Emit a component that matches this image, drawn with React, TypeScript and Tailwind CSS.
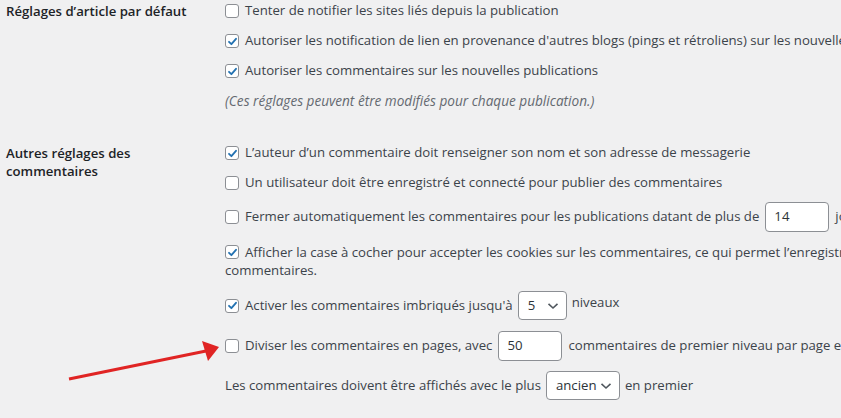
import { ReactNode } from "react";

const font = { fontFamily: '"Open Sans", "Noto Sans", sans-serif' };

function Box({ checked }: { checked?: boolean }) {
  return (
    <span className="mr-[6px] flex h-[14px] w-[14px] shrink-0 items-center justify-center rounded-[3px] border border-[#8c8f94] bg-white">
      {checked && (
        <svg width="11" height="11" viewBox="0 0 11 11">
          <path d="M2 5.8 L4.4 8.2 L9 2.8" fill="none" stroke="#2271b1" strokeWidth="1.8" strokeLinecap="round" strokeLinejoin="round" />
        </svg>
      )}
    </span>
  );
}

function Field({ value, w }: { value: string; w: string }) {
  return (
    <span className={`mx-[6px] flex h-[30px] items-center rounded-[4px] border border-[#8c8f94] bg-white pl-[8px] text-[#2c3338] ${w}`}>
      {value}
    </span>
  );
}

function Chevron() {
  return (
    <svg width="12" height="8" viewBox="0 0 12 8">
      <path d="M1.5 1.8 L6 6 L10.5 1.8" fill="none" stroke="#50575e" strokeWidth="1.6" />
    </svg>
  );
}

function Dropdown({ value, w }: { value: string; w: string }) {
  return (
    <span className={`mx-[5px] flex h-[29px] items-center justify-between rounded-[4px] border border-[#8c8f94] bg-white pl-[9px] pr-[7px] text-[#2c3338] ${w}`}>
      <span>{value}</span>
      <Chevron />
    </span>
  );
}

function Row({ children, className = "" }: { children: ReactNode; className?: string }) {
  return <div className={`flex items-center whitespace-nowrap ${className}`}>{children}</div>;
}

export default function App() {
  return (
    <div className="relative h-[418px] w-[841px] overflow-hidden bg-[#f0f0f1] text-[13.2px] text-[#3c434a]" style={font}>
      {/* Réglages d'article par défaut */}
      <div className="flex pt-[1px]">
        <div className="w-[225px] shrink-0 pl-[6px] font-semibold leading-[20px] text-[#1d2327]">
          Réglages d’article par défaut
        </div>
        <div className="flex flex-col">
          <Row className="h-[20px]">
            <Box />
            Tenter de notifier les sites liés depuis la publication
          </Row>
          <Row className="mt-[10px] h-[20px]">
            <Box checked />
            Autoriser les notification de lien en provenance d'autres blogs (pings et rétroliens) sur les nouvelles publications
          </Row>
          <Row className="mt-[10px] h-[20px]">
            <Box checked />
            Autoriser les commentaires sur les nouvelles publications
          </Row>
          <Row className="mt-[10px] h-[20px] text-[13.6px] italic text-[#646970]">
            (Ces réglages peuvent être modifiés pour chaque publication.)
          </Row>
        </div>
      </div>

      {/* Autres réglages des commentaires */}
      <div className="mt-[32px] flex">
        <div className="w-[225px] shrink-0 pl-[6px] pr-[90px] pt-[1px] font-semibold leading-[18px] text-[#1d2327]">
          Autres réglages des commentaires
        </div>
        <div className="flex flex-col">
          <Row className="h-[20px]">
            <Box checked />
            L’auteur d’un commentaire doit renseigner son nom et son adresse de messagerie
          </Row>
          <Row className="mt-[10px] h-[20px]">
            <Box />
            Un utilisateur doit être enregistré et connecté pour publier des commentaires
          </Row>
          <Row className="mt-[9px] h-[30px]">
            <Box />
            Fermer automatiquement les commentaires pour les publications datant de plus de
            <Field value="14" w="w-[64px]" />
            jours
          </Row>
          <div className="mt-[11px] leading-[18px] whitespace-nowrap">
            <div className="flex items-center">
              <Box checked />
              Afficher la case à cocher pour accepter les cookies sur les commentaires, ce qui permet l’enregistrement des informations de l’auteur dans les
            </div>
            <div>commentaires.</div>
          </div>
          <Row className="mt-[12px] h-[29px]">
            <Box checked />
            Activer les commentaires imbriqués jusqu'à
            <Dropdown value="5" w="w-[49px]" />
            <span className="-mt-[5px]">niveaux</span>
          </Row>
          <Row className="mt-[11px] h-[29px]">
            <Box />
            Diviser les commentaires en pages, avec
            <Field value="50" w="w-[64px]" />
            commentaires de premier niveau par page et la page
          </Row>
          <Row className="mt-[11px] h-[29px]">
            Les commentaires doivent être affichés avec le plus
            <Dropdown value="ancien" w="w-[74px]" />
            en premier
          </Row>
        </div>
      </div>

      {/* pointer arrow */}
      <svg className="absolute left-0 top-0" width="841" height="418" viewBox="0 0 841 418">
        <line x1="69" y1="379" x2="206" y2="351" stroke="#e02424" strokeWidth="3" />
        <polygon points="219,347 202,341 208,361" fill="#e02424" />
      </svg>
    </div>
  );
}
